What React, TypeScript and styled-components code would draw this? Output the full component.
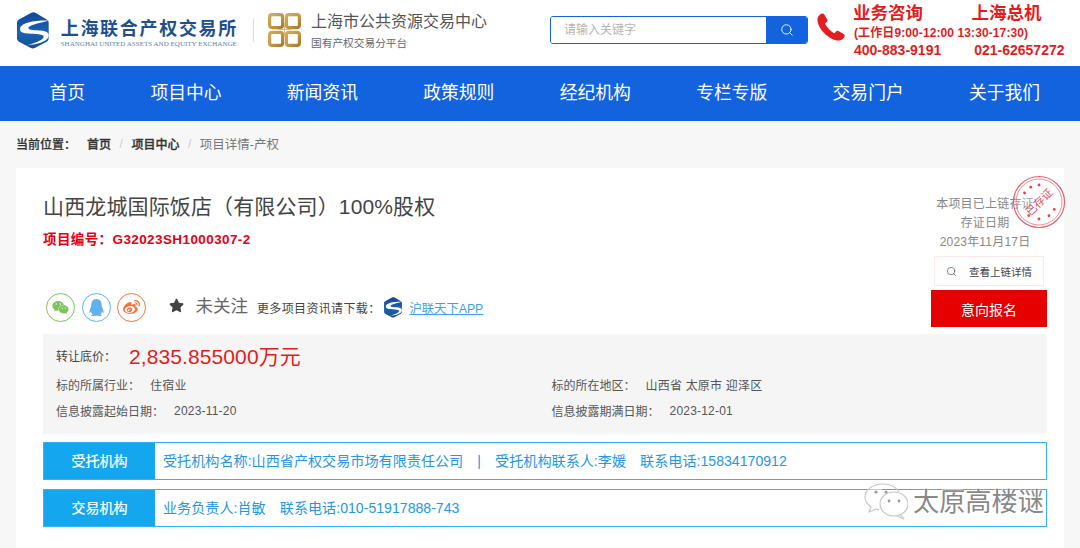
import React from "react";
import styled, { createGlobalStyle } from "styled-components";
import { FaWeixin, FaQq, FaWeibo, FaStar } from "react-icons/fa";
import { Search } from "lucide-react";

const Global = createGlobalStyle`
  html, body { margin: 0; padding: 0; background: #f7f7f7; overflow: hidden; }
  * { box-sizing: border-box; }
  body { font-family: "Liberation Sans", "Noto Sans CJK SC", sans-serif; color: #333; }
`;

const Page = styled.div`
  width: 1080px;
  height: 548px;
  overflow: hidden;
  position: relative;
`;

const Header = styled.header`
  height: 66px;
  background: #fff;
  display: flex;
  align-items: flex-start;
  padding-left: 17px;
`;

const LogoBlock = styled.div`
  display: flex;
  align-items: center;
  margin-top: 12px;
  width: 221px;
  gap: 12px;
`;

const LogoText = styled.div`
  display: flex;
  flex-direction: column;
  align-items: flex-start;
  margin-top: 6px;
`;

const LogoCn = styled.div`
  font-family: "Liberation Serif", "Noto Sans CJK SC", serif;
  font-size: 18px;
  line-height: 22px;
  font-weight: 700;
  color: #1f4f8f;
  letter-spacing: 1.7px;
  white-space: nowrap;
`;

const LogoEn = styled.div`
  font-family: "Liberation Serif", serif;
  font-size: 7px;
  line-height: 10px;
  margin-top: -1px;
  color: #5f7fae;
  white-space: nowrap;
  letter-spacing: 0.02px;
`;

const VLine = styled.div`
  width: 1px;
  height: 23px;
  background: #cfe0ee;
  margin: 19px 14px 0 15px;
`;

const Gold = styled.div`
  display: flex;
  margin-top: 13px;
  gap: 10px;
`;

const CenterText = styled.div`
  display: flex;
  flex-direction: column;
  margin-top: -2px;
`;

const CenterTitle = styled.div`
  font-size: 16px;
  line-height: 22px;
  color: #555;
  white-space: nowrap;
`;

const CenterSub = styled.div`
  font-size: 10.7px;
  line-height: 15px;
  margin-top: 3px;
  color: #666;
  white-space: nowrap;
`;

const SearchBox = styled.div`
  width: 258px;
  height: 28px;
  margin: 16px 0 0 63px;
  display: flex;
  border: 1px solid #1363df;
  border-radius: 3px;
  overflow: hidden;
  flex: none;
`;

const SearchField = styled.div`
  flex: 1;
  font-size: 12px;
  line-height: 26px;
  padding-left: 13px;
  color: #b5b5b5;
  background: #fff;
`;

const SearchBtn = styled.div`
  width: 41px;
  background: #1363df;
  color: #fff;
  display: flex;
  align-items: center;
  justify-content: center;
`;

const Phone = styled.div`
  margin: 12px 0 0 8px;
  flex: none;
`;

const Contact = styled.div`
  margin: 3px 0 0 8px;
  color: #e61c1c;
  font-weight: 700;
  white-space: nowrap;
`;

const ContactTitles = styled.div`
  font-size: 17.5px;
  line-height: 20px;
  display: flex;
  gap: 48.5px;
  margin-left: -1px;
`;

const ContactHours = styled.div`
  font-size: 12px;
  line-height: 15px;
  margin-top: 3px;
  letter-spacing: 0.1px;
`;

const ContactNums = styled.div`
  font-size: 14px;
  line-height: 18px;
  display: flex;
  gap: 33px;
`;

const Nav = styled.nav`
  height: 55px;
  background: #1363df;
  display: flex;
  align-items: center;
  padding-left: 49.5px;
  gap: 65.3px;
`;

const NavItem = styled.a`
  color: #fff;
  font-size: 17.8px;
  line-height: 55px;
  white-space: nowrap;
`;

const Crumbs = styled.div`
  height: 47px;
  padding: 0 0 2px 16px;
  display: flex;
  align-items: center;
  font-size: 12px;
  color: #333;
`;

const CrumbLabel = styled.span`
  margin-right: 11px;
  font-weight: 500;
  -webkit-text-stroke: 0.2px #333;
`;

const CrumbLink = styled.span`
  font-weight: 500;
  -webkit-text-stroke: 0.3px #333;
`;

const CrumbSep = styled.span`
  color: #ccc;
  margin: 0 8.5px;
`;

const CrumbNow = styled.span`
  color: #777;
  font-size: 12.5px;
`;

const Card = styled.main`
  margin: 0 16px;
  height: 380px;
  background: #fff;
  padding: 0 17px 0 27px;
  position: relative;
`;

const Top = styled.div`
  height: 166px;
  display: flex;
  justify-content: space-between;
`;

const TopLeft = styled.div`
  display: flex;
  flex-direction: column;
`;

const Title = styled.h1`
  margin: 25px 0 0;
  font-size: 21px;
  line-height: 28px;
  font-weight: 400;
  color: #444;
  white-space: nowrap;
  letter-spacing: 0.13px;
`;

const Code = styled.div`
  margin-top: 10px;
  font-size: 13.5px;
  line-height: 18px;
  font-weight: 700;
  color: #e60012;
  letter-spacing: 0.4px;
`;

const Social = styled.div`
  margin-top: 44px;
  display: flex;
  align-items: center;
  padding-left: 3px;
`;

const SocialIcon = styled.span<{ $c: string }>`
  width: 29px;
  height: 29px;
  border-radius: 50%;
  border: 1px solid ${(p) => p.$c};
  color: ${(p) => p.$c};
  display: flex;
  align-items: center;
  justify-content: center;
  margin-right: 6.5px;
  font-size: 17px;
`;

const StarWrap = styled.span`
  color: #444;
  font-size: 15px;
  display: flex;
  margin: -4px 0 0 16px;
`;

const Follow = styled.span`
  font-size: 17.5px;
  line-height: 20px;
  color: #666;
  margin: -4px 0 0 12px;
`;

const More = styled.span`
  font-size: 12px;
  color: #444;
  margin: 0 3px 0 9px;
  letter-spacing: 0.35px;
`;

const AppLink = styled.a`
  font-size: 12.3px;
  color: #3aa3ee;
  text-decoration: underline;
  margin-left: 8px;
`;

const TopRight = styled.div`
  width: 116px;
  display: flex;
  flex-direction: column;
  align-items: center;
  padding-top: 27px;
`;

const ProofLine = styled.div`
  font-size: 12px;
  line-height: 19px;
  color: #888;
  white-space: nowrap;
  margin-right: 8px;
  letter-spacing: 0.2px;
`;

const ProofBtn = styled.div`
  width: 110px;
  height: 30px;
  margin-top: 4px;
  border: 1px solid #fbeaea;
  display: flex;
  align-items: center;
  justify-content: center;
  gap: 12px;
  font-size: 10.5px;
  color: #444;
`;

const ApplyBtn = styled.div`
  width: 116px;
  height: 37px;
  margin-top: 4px;
  background: #e60000;
  color: #fff;
  font-size: 14px;
  display: flex;
  align-items: center;
  justify-content: center;
`;

const Info = styled.section`
  height: 100px;
  background: #f5f5f5;
  padding: 7px 13px 0;
`;

const PriceRow = styled.div`
  display: flex;
  align-items: center;
  height: 28px;
`;

const Label = styled.span`
  font-size: 12px;
  color: #444;
`;

const Price = styled.span`
  font-size: 21px;
  color: #e61c1c;
  margin-left: 13px;
  letter-spacing: 0.1px;
`;

const InfoGrid = styled.div`
  display: grid;
  grid-template-columns: 495.5px 1fr;
  grid-auto-rows: 26.5px;
  margin-top: 2px;
`;

const InfoCell = styled.div`
  display: flex;
  align-items: center;
  font-size: 12px;
  color: #555;
`;

const InfoValue = styled.span`
  margin-left: 10px;
  letter-spacing: 0.2px;
`;

const Agency = styled.div`
  height: 38px;
  margin-top: 8px;
  border: 1px solid #33b1f5;
  display: flex;
  align-items: center;
  & + & { margin-top: 9px; }
`;

const AgencyLabel = styled.div`
  width: 111px;
  height: 100%;
  padding-bottom: 2px;
  background: #14a6ee;
  color: #fff;
  font-size: 14px;
  display: flex;
  align-items: center;
  justify-content: center;
  -webkit-text-stroke: 0.2px #fff;
`;

const AgencyText = styled.div`
  margin-left: 8px;
  padding-bottom: 2px;
  font-size: 14.12px;
  color: #2497e6;
  white-space: pre;
`;

const Stamp = styled.div`
  position: absolute;
  right: -2px;
  top: 7px;
`;

const StampLabel = styled.text`
  font-family: "Noto Sans CJK SC", sans-serif;
  font-size: 11px;
  fill: #e8505a;
`;

const Watermark = styled.div`
  position: absolute;
  left: 864px;
  top: 480px;
  display: flex;
  align-items: center;
  gap: 5px;
`;

const WatermarkText = styled.span`
  font-size: 26.2px;
  line-height: 44px;
  color: rgba(120, 120, 120, 0.9);
  text-shadow: 1px 1px 1px rgba(255, 255, 255, 0.9), -1px -1px 1px rgba(255,255,255,0.6);
  white-space: nowrap;
`;

const SLogo = ({ size }: { size: number }) => (
  <svg width={size} height={size * 1.15} viewBox="0 0 32 37">
    <defs>
      <linearGradient id="hexFill" x1="0" y1="0" x2="0" y2="1">
        <stop offset="0" stopColor="#12479a" />
        <stop offset="0.55" stopColor="#1a62b4" />
        <stop offset="1" stopColor="#14508f" />
      </linearGradient>
    </defs>
    <path d="M14 1 C16 0 17 0 19 1 L30 7.5 C31.5 8.5 32 9.5 32 11 L32 26 C32 28 31.5 29 30 30 L18.5 36 C16.5 37 15.5 37 13.5 36 L2 30 C0.5 29 0 28 0 26 L0 11 C0 9.5 0.5 8.5 2 7.5Z" fill="url(#hexFill)" />
    <path d="M32 8.5 C20 8 3.5 10 3 17 C3 24 20 20.5 26 23.5 C29 25.5 24 30 10 33.5 C22 33 33 29 32 23 C31 16 14 20 11.5 16.5 C10.5 13.5 20 12 32 8.5Z" fill="#fff" />
  </svg>
);

const GoldLogo = () => (
  <svg width="33" height="34" viewBox="0 0 33 34">
    <defs>
      <linearGradient id="goldFill" x1="0" y1="0" x2="1" y2="1">
        <stop offset="0" stopColor="#d2ac5c" />
        <stop offset="0.5" stopColor="#c29a48" />
        <stop offset="1" stopColor="#a97c2c" />
      </linearGradient>
    </defs>
    <g fill="none" stroke="url(#goldFill)" strokeWidth="3.2">
      <rect x="1.6" y="1.6" width="13" height="13" rx="2.5" />
      <rect x="18.4" y="1.6" width="13" height="13" rx="2.5" />
      <rect x="1.6" y="19.4" width="13" height="13" rx="2.5" />
      <rect x="18.4" y="19.4" width="13" height="13" rx="2.5" />
    </g>
    <path d="M10 16.5 H23 M16.5 10 V24" stroke="#d9bd82" strokeWidth="1" fill="none" />
  </svg>
);

const PhoneIcon = () => (
  <svg width="30" height="30" viewBox="0 0 30 30">
    <path
      d="M6 1.5 C4 2 2 4 1.5 6.5 C1 11 4 17 8.5 21.5 C13 26 19 29 23.5 28.5 C26 28 28 26 28.5 24.5 C29 23.5 28.5 22.5 27.5 22 L22.5 19 C21.5 18.5 20.5 18.7 20 19.5 L18.5 21.3 C15.5 20 10 14.5 9 11.5 L10.8 10 C11.6 9.3 11.8 8.3 11.2 7.4 L8.3 2.5 C7.8 1.6 7 1.2 6 1.5Z"
      fill="#e41e20"
    />
  </svg>
);

const StampMark = () => (
  <svg width="54" height="54" viewBox="0 0 54 54">
    <circle cx="27" cy="27" r="25.5" fill="rgba(255,255,255,0.2)" stroke="#e8606a" strokeWidth="1.2" />
    <circle cx="27" cy="27" r="23" fill="none" stroke="#e8606a" strokeWidth="0.7" />
    {[-148, -119, -90, 26, 54, 90, 127].map((a) => (
      <circle
        key={a}
        cx={27 + 17 * Math.cos((a * Math.PI) / 180)}
        cy={27 + 17 * Math.sin((a * Math.PI) / 180)}
        r="1.4"
        fill="#e8404a"
      />
    ))}
    <StampLabel x="27" y="31" textAnchor="middle" transform="rotate(-45 27 27)">已存证</StampLabel>
  </svg>
);

const WechatMark = () => (
  <svg width="44" height="38" viewBox="0 0 44 38" fill="none" stroke="#c8c8c8" strokeWidth="1.2">
    <path d="M19 1 C9 1 1 6.5 1 14 C1 18 3.5 21.5 7 24 L5 29 L12 26 C13 26.3 14 26.5 15 26.6" fill="rgba(255,255,255,0.5)" />
    <path d="M19 1 C26 1 32 4 35 9" />
    <ellipse cx="30" cy="21" rx="14" ry="12" fill="rgba(255,255,255,0.7)" />
    <path d="M36 31 L40 36 L33 33" />
    <circle cx="12" cy="9" r="1.6" fill="#999" stroke="none" />
    <circle cx="22" cy="9" r="1.6" fill="#999" stroke="none" />
    <circle cx="25" cy="18" r="1.4" fill="#999" stroke="none" />
    <circle cx="35" cy="18" r="1.4" fill="#999" stroke="none" />
  </svg>
);

const navItems = ["首页", "项目中心", "新闻资讯", "政策规则", "经纪机构", "专栏专版", "交易门户", "关于我们"];

export default function App() {
  return (
    <Page>
      <Global />
      <Header>
        <LogoBlock>
          <SLogo size={32} />
          <LogoText>
            <LogoCn>上海联合产权交易所</LogoCn>
            <LogoEn>SHANGHAI UNITED ASSETS AND EQUITY EXCHANGE</LogoEn>
          </LogoText>
        </LogoBlock>
        <VLine />
        <Gold>
          <GoldLogo />
          <CenterText>
            <CenterTitle>上海市公共资源交易中心</CenterTitle>
            <CenterSub>国有产权交易分平台</CenterSub>
          </CenterText>
        </Gold>
        <SearchBox>
          <SearchField>请输入关键字</SearchField>
          <SearchBtn>
            <Search size={14} strokeWidth={1.6} />
          </SearchBtn>
        </SearchBox>
        <Phone>
          <PhoneIcon />
        </Phone>
        <Contact>
          <ContactTitles>
            <span>业务咨询</span>
            <span>上海总机</span>
          </ContactTitles>
          <ContactHours>(工作日9:00-12:00 13:30-17:30)</ContactHours>
          <ContactNums>
            <span>400-883-9191</span>
            <span>021-62657272</span>
          </ContactNums>
        </Contact>
      </Header>
      <Nav>
        {navItems.map((n) => (
          <NavItem key={n}>{n}</NavItem>
        ))}
      </Nav>
      <Crumbs>
        <CrumbLabel>当前位置：</CrumbLabel>
        <CrumbLink>首页</CrumbLink>
        <CrumbSep>/</CrumbSep>
        <CrumbLink>项目中心</CrumbLink>
        <CrumbSep>/</CrumbSep>
        <CrumbNow>项目详情-产权</CrumbNow>
      </Crumbs>
      <Card>
        <Top>
          <TopLeft>
            <Title>山西龙城国际饭店（有限公司）100%股权</Title>
            <Code>项目编号：G32023SH1000307-2</Code>
            <Social>
              <SocialIcon $c="#7cc35c"><FaWeixin /></SocialIcon>
              <SocialIcon $c="#5cb3f0"><FaQq /></SocialIcon>
              <SocialIcon $c="#f0763c"><FaWeibo /></SocialIcon>
              <StarWrap><FaStar /></StarWrap>
              <Follow>未关注</Follow>
              <More>更多项目资讯请下载：</More>
              <SLogo size={18} />
              <AppLink>沪联天下APP</AppLink>
            </Social>
          </TopLeft>
          <TopRight>
            <ProofLine>本项目已上链存证</ProofLine>
            <ProofLine>存证日期</ProofLine>
            <ProofLine>2023年11月17日</ProofLine>
            <ProofBtn>
              <Search size={11} strokeWidth={1.4} />
              <span>查看上链详情</span>
            </ProofBtn>
            <ApplyBtn>意向报名</ApplyBtn>
          </TopRight>
        </Top>
        <Info>
          <PriceRow>
            <Label>转让底价：</Label>
            <Price>2,835.855000万元</Price>
          </PriceRow>
          <InfoGrid>
            <InfoCell>标的所属行业：<InfoValue>住宿业</InfoValue></InfoCell>
            <InfoCell>标的所在地区：<InfoValue>山西省 太原市 迎泽区</InfoValue></InfoCell>
            <InfoCell>信息披露起始日期：<InfoValue>2023-11-20</InfoValue></InfoCell>
            <InfoCell>信息披露期满日期：<InfoValue>2023-12-01</InfoValue></InfoCell>
          </InfoGrid>
        </Info>
        <Agency>
          <AgencyLabel>受托机构</AgencyLabel>
          <AgencyText>受托机构名称:山西省产权交易市场有限责任公司　|　受托机构联系人:李媛　联系电话:15834170912</AgencyText>
        </Agency>
        <Agency>
          <AgencyLabel>交易机构</AgencyLabel>
          <AgencyText>业务负责人:肖敏　联系电话:010-51917888-743</AgencyText>
        </Agency>
        <Stamp>
          <StampMark />
        </Stamp>
      </Card>
      <Watermark>
        <WechatMark />
        <WatermarkText>太原高楼谜</WatermarkText>
      </Watermark>
    </Page>
  );
}
